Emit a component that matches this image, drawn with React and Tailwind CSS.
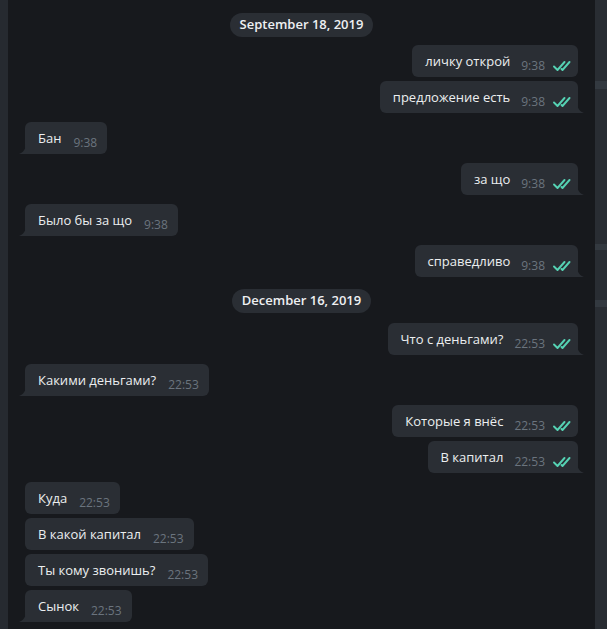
// App.jsx — dark messenger chat log
const messages = [
  { type: "date", text: "September 18, 2019", mt: "mt-[13px]" },
  { out: true, text: "личку открой", time: "9:38", mt: "mt-[8px]" },
  { out: true, text: "предложение есть", time: "9:38", tail: true, mt: "mt-[4px]" },
  { out: false, text: "Бан", time: "9:38", tail: true, mt: "mt-[9px]" },
  { out: true, text: "за що", time: "9:38", tail: true, mt: "mt-[9px]" },
  { out: false, text: "Было бы за що", time: "9:38", tail: true, mt: "mt-[9px]" },
  { out: true, text: "справедливо", time: "9:38", tail: true, mt: "mt-[9px]" },
  { type: "date", text: "December 16, 2019", mt: "mt-[12px]" },
  { out: true, text: "Что с деньгами?", time: "22:53", tail: true, mt: "mt-[10px]" },
  { out: false, text: "Какими деньгами?", time: "22:53", tail: true, mt: "mt-[9px]" },
  { out: true, text: "Которые я внёс", time: "22:53", mt: "mt-[9px]" },
  { out: true, text: "В капитал", time: "22:53", tail: true, mt: "mt-[4px]" },
  { out: false, text: "Куда", time: "22:53", mt: "mt-[9px]" },
  { out: false, text: "В какой капитал", time: "22:53", mt: "mt-[4px]" },
  { out: false, text: "Ты кому звонишь?", time: "22:53", mt: "mt-[4px]" },
  { out: false, text: "Сынок", time: "22:53", tail: true, mt: "mt-[4px]" },
];

function DoubleCheck() {
  return (
    <svg width="18" height="10" viewBox="0 0 18 10" fill="none" className="mb-[3px] ml-[8px] shrink-0">
      <path d="M1 5.5 L4.5 9 L11.5 1" stroke="#55d2b3" strokeWidth="1.9" strokeLinecap="round" strokeLinejoin="round" />
      <path d="M8.5 8 L9.5 9 L16.5 1" stroke="#55d2b3" strokeWidth="1.9" strokeLinecap="round" strokeLinejoin="round" />
    </svg>
  );
}

function Tail({ out }) {
  return (
    <svg
      width="7"
      height="10"
      viewBox="0 0 7 10"
      className={`absolute bottom-0 ${out ? "-right-[6px]" : "-left-[6px] -scale-x-100"}`}
    >
      <path d="M0 0 C0.4 5 2.5 8.6 7 10 H0 Z" fill="#2a2e34" />
    </svg>
  );
}

function Bubble({ m }) {
  const corners = m.tail ? (m.out ? "rounded-md rounded-br-none" : "rounded-md rounded-bl-none") : "rounded-md";
  return (
    <div className={`flex ${m.out ? "justify-end" : "justify-start"} ${m.mt}`}>
      <div className={`relative flex items-end bg-[#2a2e34] ${corners} pt-[7px] pb-[3px] pl-[13px] ${m.out ? "pr-[7px]" : "pr-[10px]"}`}>
        <span className="mb-[4px] text-[13px] leading-[18px] text-[#eceef0]">{m.text}</span>
        <span className={`${m.out ? "ml-[11px]" : "ml-[12px]"} text-[12px] leading-[16px] text-[#6b747e]`}>{m.time}</span>
        {m.out && <DoubleCheck />}
        {m.tail && <Tail out={m.out} />}
      </div>
    </div>
  );
}

export default function App() {
  return (
    <div className="flex h-[629px] w-[607px] overflow-hidden bg-[#17191d] font-['Open_Sans',sans-serif]">
      <div className="w-[8px] shrink-0 bg-[#262a30]" />
      <div className="flex min-w-0 flex-1 flex-col px-[17px]">
        {messages.map((m, i) =>
          m.type === "date" ? (
            <div key={i} className={`flex justify-center ${m.mt}`}>
              <div className="flex h-[24px] items-center rounded-full bg-[#2a2e34] px-[10px] text-[13px] font-semibold text-[#eef0f2]">
                {m.text}
              </div>
            </div>
          ) : (
            <Bubble key={i} m={m} />
          )
        )}
      </div>
      <div className="flex w-[12px] shrink-0 flex-col bg-[#292d33]">
        <div className="mt-[81px] h-[8px] bg-[#333940]" />
        <div className="mt-[155px] h-[6px] bg-[#333940]" />
        <div className="mt-[50px] h-[7px] bg-[#333940]" />
      </div>
    </div>
  );
}
